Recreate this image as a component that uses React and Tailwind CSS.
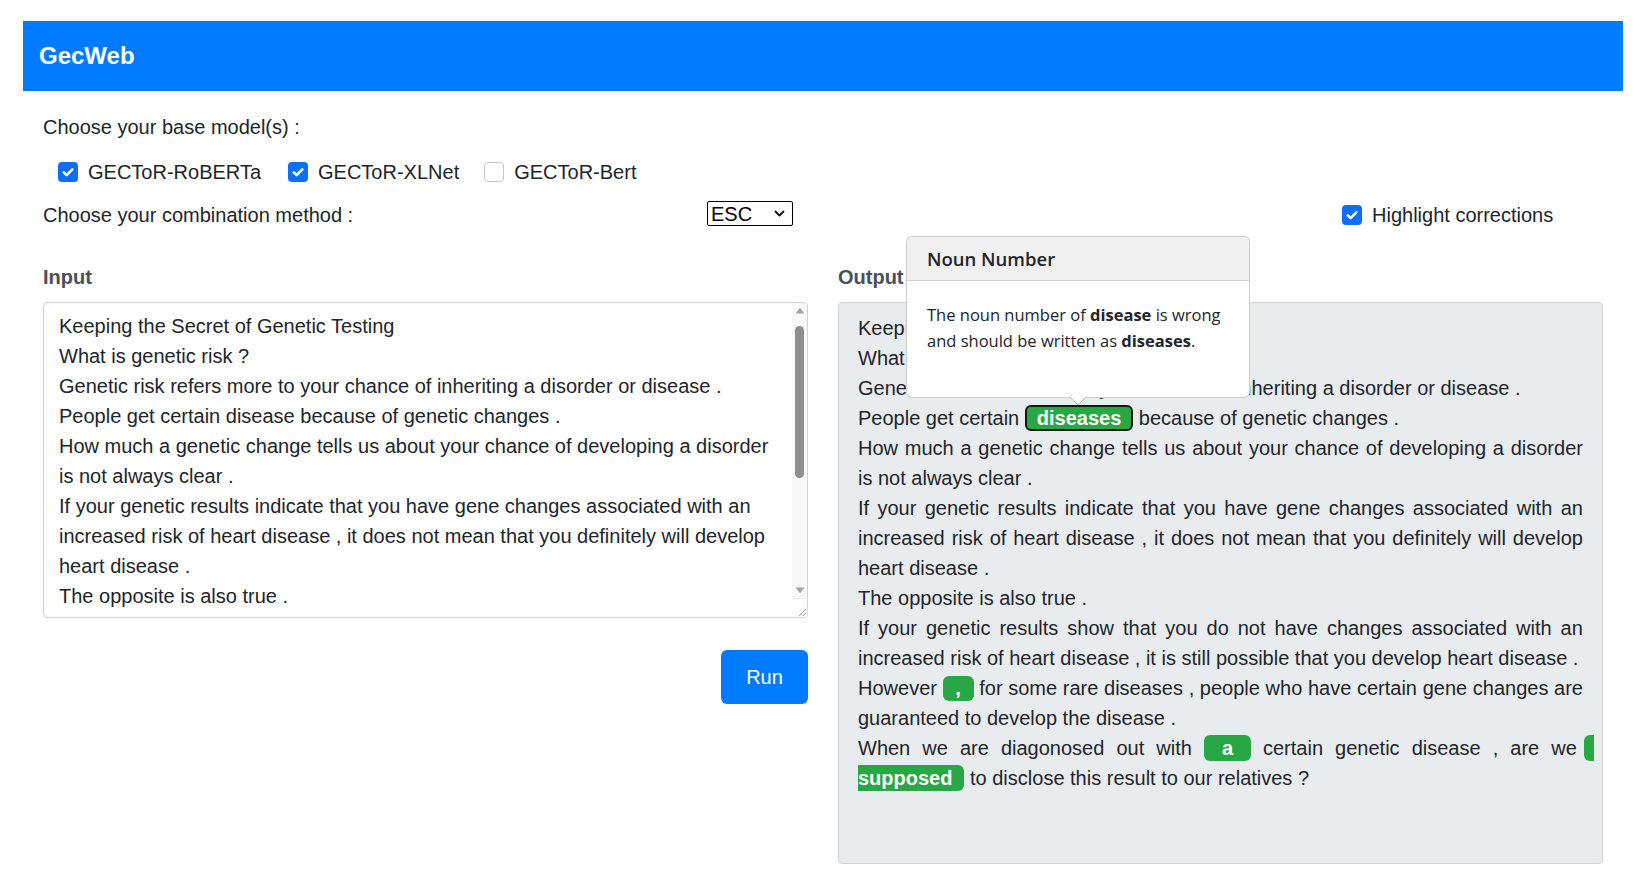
import React from "react";

function Check({ checked }) {
  if (checked) {
    return (
      <span className="w-5 h-5 rounded-[4px] bg-[#0d6efd] flex items-center justify-center shrink-0">
        <svg width="20" height="20" viewBox="0 0 20 20">
          <path d="M5.8 10.3l2.9 2.9 5.6-5.8" stroke="white" strokeWidth="2.6" fill="none" strokeLinecap="round" strokeLinejoin="round" />
        </svg>
      </span>
    );
  }
  return <span className="w-5 h-5 rounded-[4px] border border-[#c6c6c6] bg-white shrink-0" />;
}

function CheckItem({ checked, label, className }) {
  return (
    <div className={"flex items-center " + (className || "")}>
      <Check checked={checked} />
      <span className="ml-[10px] leading-[30px]">{label}</span>
    </div>
  );
}

function J({ text }) {
  return (
    <div className="flex justify-between items-center h-[30px] leading-[30px] whitespace-nowrap">
      {text.split(" ").map((w, i) => (
        <span key={i}>{w}</span>
      ))}
    </div>
  );
}

function L({ children }) {
  return <div className="h-[30px] leading-[30px] whitespace-pre">{children}</div>;
}

const inputLines = [
  "Keeping the Secret of Genetic Testing",
  "What is genetic risk ?",
  "Genetic risk refers more to your chance of inheriting a disorder or disease .",
  "People get certain disease because of genetic changes .",
  "How much a genetic change tells us about your chance of developing a disorder",
  "is not always clear .",
  "If your genetic results indicate that you have gene changes associated with an",
  "increased risk of heart disease , it does not mean that you definitely will develop",
  "heart disease .",
  "The opposite is also true .",
];

export default function App() {
  return (
    <div className="min-h-[872px] bg-white font-['Liberation_Sans',Arial,sans-serif] text-[#212529] text-[20px] pt-[21px] pl-[23px] pr-[17px]">
      <header className="h-[70px] bg-[#007bff] flex items-center pl-4">
        <span className="text-white font-bold text-[24px]">GecWeb</span>
      </header>

      <div className="px-5">
        <div className="mt-[21px] h-[30px] leading-[30px]">Choose your base model(s) :</div>

        <div className="mt-[15px] h-[30px] flex items-center pl-[15px]">
          <CheckItem checked label="GECToR-RoBERTa" className="mr-[27px]" />
          <CheckItem checked label="GECToR-XLNet" className="mr-[25px]" />
          <CheckItem checked={false} label="GECToR-Bert" />
        </div>

        <div className="mt-[13px] grid grid-cols-2 gap-[30px] h-[30px]">
          <div className="flex items-center justify-between pr-[15px]">
            <span className="leading-[30px]">Choose your combination method :</span>
            <div className="w-[86px] h-[25px] border border-black rounded-[2px] flex items-center justify-between pl-[3px] pr-[7px] -mt-[3px] bg-white">
              <span className="leading-none text-black">ESC</span>
              <svg width="11" height="7" viewBox="0 0 11 7">
                <path d="M1.5 1.5l4 4 4-4" stroke="#111" strokeWidth="1.8" fill="none" strokeLinecap="round" strokeLinejoin="round" />
              </svg>
            </div>
          </div>
          <div className="flex items-center pl-[504px]">
            <CheckItem checked label="Highlight corrections" />
          </div>
        </div>

        <div className="mt-[32px] grid grid-cols-2 gap-[30px]">
          {/* Input column */}
          <div>
            <div className="h-[30px] leading-[30px] font-bold text-[#495057]">Input</div>
            <div className="mt-[10px] h-[316px] border border-[#ced4da] rounded-[4px] flex overflow-hidden bg-white">
              <div className="flex-1 pl-[15px] pt-[8px] overflow-hidden">
                {inputLines.map((l, i) => (
                  <div key={i} className="h-[30px] leading-[30px] whitespace-pre">{l}</div>
                ))}
              </div>
              <div className="w-[15px] bg-[#f8f8f8] flex flex-col items-center">
                <div className="h-[15px] w-full flex items-center justify-center">
                  <svg width="10" height="7" viewBox="0 0 10 7">
                    <path d="M0.5 6.5L5 0.8L9.5 6.5Z" fill="#a3a3a3" />
                  </svg>
                </div>
                <div className="mt-[8px] h-[152px] w-[9px] rounded-full bg-[#8e8e8e]" />
                <div className="flex-1" />
                <div className="h-[15px] w-full flex items-center justify-center">
                  <svg width="10" height="7" viewBox="0 0 10 7">
                    <path d="M0.5 0.5L5 6.2L9.5 0.5Z" fill="#a3a3a3" />
                  </svg>
                </div>
                <div className="h-[19px] w-full flex items-end justify-end bg-white border-t border-[#ededed]">
                  <svg width="12" height="12" viewBox="0 0 12 12">
                    <path d="M11 4L4 11M11 8L8 11" stroke="#9a9a9a" strokeWidth="1" />
                  </svg>
                </div>
              </div>
            </div>
            <div className="mt-8 flex justify-end">
              <button className="w-[87px] h-[54px] bg-[#007bff] rounded-[6px] text-white text-[20px]">Run</button>
            </div>
          </div>

          {/* Output column */}
          <div className="relative">
            <div className="h-[30px] leading-[30px] font-bold text-[#495057]">Output</div>
            <div className="mt-[10px] h-[562px] bg-[#e9ecef] border border-[#ced4da] rounded-[4px] pt-[10px] px-[19px] overflow-hidden">
              <L>Keeping the Secret of Genetic Testing</L>
              <L>What is genetic risk ?</L>
              <L>Genetic risk refers more to your chance of inheriting a disorder or disease .</L>
              <L>
                {"People get certain "}
                <span className="inline-block align-top mt-[2px] h-[26px] leading-[22px] border-2 border-[#141618] rounded-[6px] bg-[#28a745] px-[10px] text-white font-bold">diseases</span>
                {" because of genetic changes ."}
              </L>
              <J text="How much a genetic change tells us about your chance of developing a disorder" />
              <L>is not always clear .</L>
              <J text="If your genetic results indicate that you have gene changes associated with an" />
              <J text="increased risk of heart disease , it does not mean that you definitely will develop" />
              <L>heart disease .</L>
              <L>The opposite is also true .</L>
              <J text="If your genetic results show that you do not have changes associated with an" />
              <L>increased risk of heart disease , it is still possible that you develop heart disease .</L>
              <div className="flex justify-between items-center h-[30px] leading-[30px] whitespace-nowrap">
                <span>However</span>
                <span className="w-[31px] h-[25px] rounded-[6px] bg-[#28a745] text-white font-bold flex items-center justify-center leading-none">,</span>
                {"for some rare diseases , people who have certain gene changes are".split(" ").map((w, i) => (
                  <span key={i}>{w}</span>
                ))}
              </div>
              <L>guaranteed to develop the disease .</L>
              <div className="flex justify-between items-center h-[30px] leading-[30px] whitespace-nowrap mr-[-11px]">
                {"When we are diagonosed out with".split(" ").map((w, i) => (
                  <span key={i}>{w}</span>
                ))}
                <span className="w-[47px] h-[26px] rounded-[6px] bg-[#28a745] text-white font-bold flex items-center justify-center leading-none">a</span>
                {"certain genetic disease , are".split(" ").map((w, i) => (
                  <span key={"b" + i}>{w}</span>
                ))}
                <span className="flex items-center">
                  <span>we</span>
                  <span className="ml-[7px] w-[10px] h-[26px] rounded-l-[6px] bg-[#28a745]" />
                </span>
              </div>
              <L>
                <span className="inline-block align-top mt-[2px] h-[26px] leading-[26px] rounded-r-[6px] bg-[#28a745] pr-[12px] text-white font-bold">supposed</span>
                {" to disclose this result to our relatives ?"}
              </L>
            </div>

            {/* Popover */}
            <div className="absolute left-[68px] top-[-26px] w-[344px] z-10 bg-white border border-[rgba(0,0,0,0.2)] rounded-[6px] font-['Open_Sans','Noto_Sans',sans-serif]">
              <div className="h-[44px] bg-[#f0f0f0] border-b border-[#d2d2d2] rounded-t-[6px] flex items-center pl-[20px] pt-[1px] text-[18.5px] font-semibold text-[#212529]">
                Noun Number
              </div>
              <div className="h-[116px] pl-[20px] pr-[12px] pt-[21px] text-[16.5px] leading-[26px] text-[#212529]">
                The noun number of <b>disease</b> is wrong
                <br />
                and should be written as <b>diseases</b>.
              </div>
              <svg className="absolute left-1/2 -translate-x-1/2 bottom-[-9px]" width="18" height="10" viewBox="0 0 18 10">
                <path d="M0 0L9 9L18 0Z" fill="white" />
                <path d="M0.5 0.5L9 9L17.5 0.5" stroke="rgba(0,0,0,0.25)" strokeWidth="1" fill="none" />
                <rect x="0" y="0" width="18" height="1" fill="white" />
              </svg>
            </div>
          </div>
        </div>
      </div>
    </div>
  );
}
